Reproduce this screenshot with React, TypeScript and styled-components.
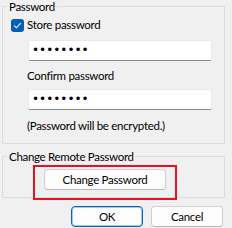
import React from 'react';
import styled, { createGlobalStyle } from 'styled-components';

const GlobalStyle = createGlobalStyle`
  html, body {
    margin: 0;
    padding: 0;
    background: #f0f0f0;
  }
  body {
    font-family: Lato, "Noto Sans", sans-serif;
    font-size: 11.5px;
    letter-spacing: -0.3px;
    color: #000;
  }
`;

const Dialog = styled.div`
  width: 232px;
  height: 228px;
  box-sizing: border-box;
  padding: 0 7px 0 2px;
  display: flex;
  flex-direction: column;
  overflow: hidden;
`;

const Group = styled.fieldset<{ $top?: number; $bottom: number }>`
  margin: ${p => p.$top || 0}px 0 0 0;
  padding: 0 0 ${p => p.$bottom}px 0;
  border: 1px solid #dcdcdc;
  min-width: 0;
  display: flex;
  flex-direction: column;
  align-items: flex-start;
`;

const Legend = styled.legend`
  margin-left: 4px;
  padding: 0 2px;
  line-height: 13px;
`;

const CheckRow = styled.label`
  margin: 4px 0 0 8px;
  height: 16px;
  display: flex;
  align-items: center;
  gap: 3px;
  line-height: 16px;
`;

const CheckBox = styled.span`
  width: 13px;
  height: 13px;
  border-radius: 3px;
  background: #005fb8;
  display: flex;
  align-items: center;
  justify-content: center;
`;

const PasswordBox = styled.input<{ $top: number }>`
  margin: ${p => p.$top}px 0 0 25px;
  width: 184px;
  height: 21px;
  box-sizing: border-box;
  padding: 0 0 1px 3px;
  border: 1px solid #e8e8e8;
  border-bottom-color: #8a8a8a;
  border-radius: 2px;
  background: #fff;
  font-family: "DejaVu Sans", sans-serif;
  font-size: 12px;
  letter-spacing: 0px;
  outline: none;
`;

const Text = styled.div<{ $top: number }>`
  margin: ${p => p.$top}px 0 0 24px;
  line-height: 16px;
`;

const Button = styled.button<{ $default?: boolean; $width: number }>`
  width: ${p => p.$width}px;
  height: 21px;
  box-sizing: border-box;
  padding: 0;
  border: 1px solid ${p => (p.$default ? '#0067c0' : '#d0d0d0')};
  border-bottom-color: ${p => (p.$default ? '#0067c0' : '#b8b8b8')};
  border-radius: 4px;
  background: #fdfdfd;
  box-shadow: ${p => (p.$default ? 'inset 0 0 0 1px rgba(0, 103, 192, 0.35)' : 'none')};
  font-family: inherit;
  font-size: inherit;
  letter-spacing: inherit;
  color: #000;
  line-height: 19px;
`;

const Highlight = styled.div`
  position: relative;
  margin: 6px 0 0 41px;
  display: flex;

  &::after {
    content: '';
    position: absolute;
    top: -4px;
    left: -11px;
    right: -11px;
    bottom: -10px;
    border: 2px solid #e81123;
    pointer-events: none;
  }
`;

const ButtonRow = styled.div`
  margin-top: 8px;
  padding-right: 2px;
  display: flex;
  justify-content: flex-end;
  gap: 8px;
`;

const Check = () => (
  <svg width="11" height="11" viewBox="0 0 11 11">
    <path d="M2.2 5.6 L4.4 7.8 L8.8 3.2" fill="none" stroke="#fff" strokeWidth="1.1" />
  </svg>
);

export default function App() {
  return (
    <>
      <GlobalStyle />
      <Dialog>
        <Group $bottom={9}>
          <Legend>Password</Legend>
          <CheckRow>
            <CheckBox>
              <Check />
            </CheckBox>
            Store password
          </CheckRow>
          <PasswordBox $top={7} type="password" defaultValue="secret12" readOnly />
          <Text $top={7}>Confirm password</Text>
          <PasswordBox $top={5} type="password" defaultValue="secret12" readOnly />
          <Text $top={8}>(Password will be encrypted.)</Text>
        </Group>
        <Group $top={6} $bottom={7}>
          <Legend>Change Remote Password</Legend>
          <Highlight>
            <Button $width={122}>Change Password</Button>
          </Highlight>
        </Group>
        <ButtonRow>
          <Button $default $width={72}>OK</Button>
          <Button $width={72}>Cancel</Button>
        </ButtonRow>
      </Dialog>
    </>
  );
}
